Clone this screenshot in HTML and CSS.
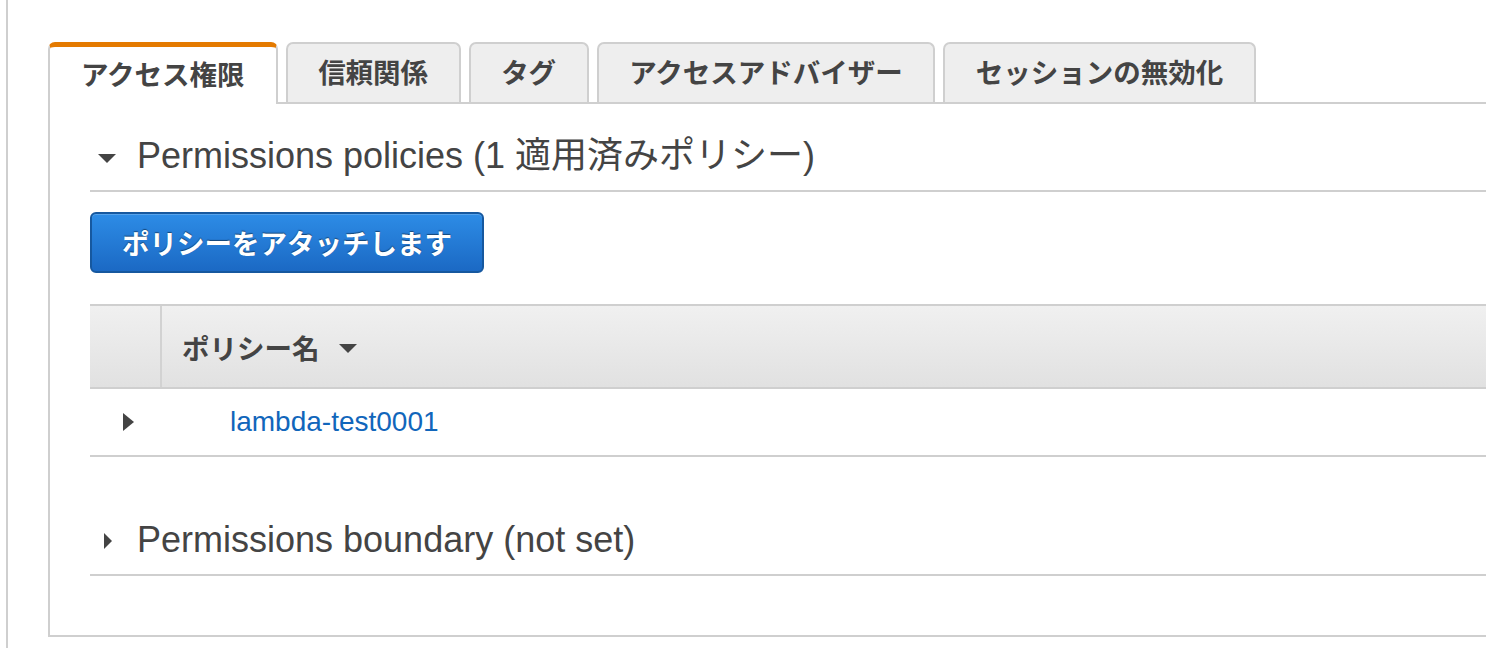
FILE: index.html
```html
<!DOCTYPE html>
<html lang="ja">
<head>
<meta charset="utf-8">
<title>IAM Role</title>
<link rel="stylesheet" href="styles.css">
</head>
<body>
<div class="frame">
  <div class="panel">
    <div class="tabs">
      <div class="tab active">アクセス権限</div>
      <div class="tab">信頼関係</div>
      <div class="tab">タグ</div>
      <div class="tab">アクセスアドバイザー</div>
      <div class="tab">セッションの無効化</div>
    </div>
    <div class="content">
      <div class="section-head first">
        <span class="tri-down"></span>
        <span class="title">Permissions policies (1 適用済みポリシー)</span>
      </div>
      <button class="btn-primary">ポリシーをアタッチします</button>
      <div class="table">
        <div class="thead">
          <div class="cell-toggle"></div>
          <div class="cell-name">ポリシー名 <span class="sort-down"></span></div>
        </div>
        <div class="trow">
          <div class="cell-toggle"><span class="tri-right"></span></div>
          <div class="cell-link"><a href="#" class="link">lambda-test0001</a></div>
        </div>
      </div>
      <div class="section-head second">
        <span class="tri-right small"></span>
        <span class="title">Permissions boundary (not set)</span>
      </div>
    </div>
  </div>
</div>
</body>
</html>
```

FILE: styles.css
```css
* { box-sizing: border-box; }

html, body {
  margin: 0;
  padding: 0;
  background: #fff;
  overflow: hidden;
}

body {
  font-family: "Liberation Sans", "Noto Sans CJK JP", sans-serif;
  color: #444;
}

.frame {
  margin-left: 6px;
  border-left: 2px solid #cfcfcf;
  height: 648px;
  padding: 42px 0 0 40px;
}

.panel {
  width: calc(100% + 60px);
}

.tabs {
  display: flex;
  gap: 8px;
  border-bottom: 2px solid #cfcfcf;
  height: 62px;
  align-items: flex-end;
}

.tab {
  height: 60px;
  padding: 0 30.5px 5px;
  display: flex;
  align-items: center;
  justify-content: center;
  background: #eeeeee;
  border: 2px solid #cfcfcf;
  border-bottom: 0;
  border-radius: 7px 7px 0 0;
  font-family: "Noto Sans CJK JP", sans-serif;
  font-weight: 700;
  font-size: 27.5px;
  color: #444;
  white-space: nowrap;
}

.tab.active {
  background: #fff;
  border-top: 5px solid #e47a00;
  height: 62px;
  margin-bottom: -2px;
  padding: 0 31px 6px;
  position: relative;
  z-index: 1;
}

.content {
  border-left: 2px solid #cfcfcf;
  border-bottom: 2px solid #cfcfcf;
  padding: 0 0 59px 40px;
}

.section-head {
  display: flex;
  align-items: center;
  border-bottom: 2px solid #cfcfcf;
  padding-bottom: 12px;
}

.section-head.first { padding-top: 30px; }
.section-head.second { padding-top: 61px; }

.title {
  font-size: 36px;
  line-height: 44px;
  color: #444;
}

.tri-down {
  width: 0;
  height: 0;
  border-left: 9px solid transparent;
  border-right: 9px solid transparent;
  border-top: 9px solid #444;
  margin: 4px 21px 0 8px;
}

.tri-right {
  display: block;
  width: 0;
  height: 0;
  border-top: 8px solid transparent;
  border-bottom: 8px solid transparent;
  border-left: 10px solid #444;
}

.tri-right.small {
  border-top-width: 8px;
  border-bottom-width: 8px;
  border-left-width: 8px;
  margin: 2px 25px 0 14px;
}

.trow .tri-right {
  border-top-width: 9px;
  border-bottom-width: 9px;
  border-left-width: 11px;
}

.btn-primary {
  display: block;
  margin-top: 20px;
  height: 61px;
  padding: 0 30px 2px;
  border: 2px solid #16589f;
  border-radius: 6px;
  background: linear-gradient(#2d8ce6, #1b69c4);
  color: #fff;
  font-family: "Noto Sans CJK JP", sans-serif;
  font-weight: 700;
  font-size: 27.5px;
  text-shadow: 0 -1px 1px rgba(0, 0, 0, 0.45);
  box-shadow: inset 0 1px 0 rgba(255, 255, 255, 0.2);
}

.table {
  margin-top: 31px;
}

.thead {
  display: flex;
  height: 85px;
  border-top: 2px solid #cfcfcf;
  border-bottom: 2px solid #cfcfcf;
  background: linear-gradient(#f0f0f0, #e1e1e1);
}

.thead .cell-toggle {
  width: 72px;
  border-right: 2px solid #d2d2d2;
}

.cell-name {
  display: flex;
  align-items: center;
  padding-left: 20px;
  font-family: "Noto Sans CJK JP", sans-serif;
  font-weight: 700;
  font-size: 27.5px;
  color: #444;
}

.sort-down {
  width: 0;
  height: 0;
  border-left: 9px solid transparent;
  border-right: 9px solid transparent;
  border-top: 9px solid #444;
  margin-left: 19px;
  margin-top: 4px;
}

.trow {
  display: flex;
  height: 68px;
  border-bottom: 2px solid #cfcfcf;
}

.trow .cell-toggle {
  width: 72px;
  display: flex;
  align-items: center;
  padding-left: 33px;
}

.cell-link {
  display: flex;
  align-items: center;
  padding-left: 68px;
}

.link {
  color: #1166bb;
  text-decoration: none;
  font-size: 28px;
}
```
